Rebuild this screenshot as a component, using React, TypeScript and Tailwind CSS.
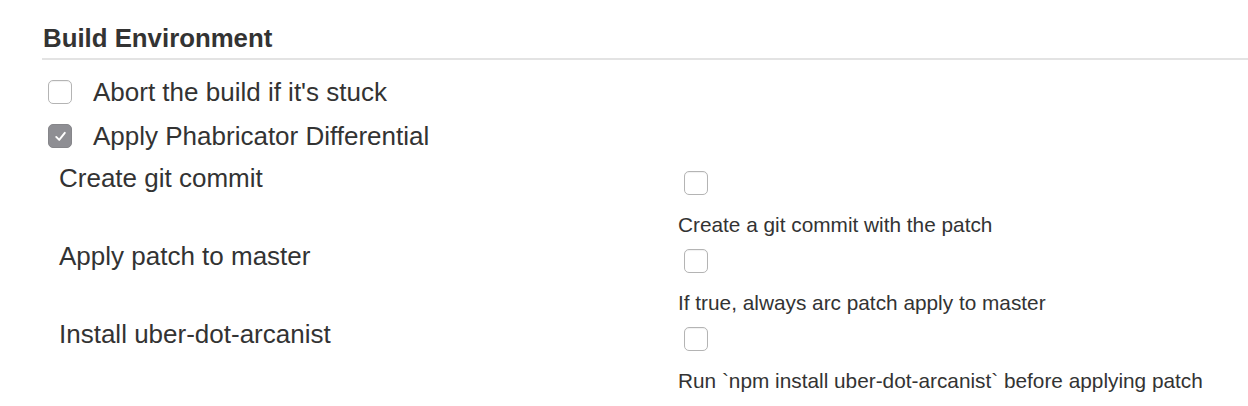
import React from 'react';

const font = { fontFamily: '"Liberation Sans", Arial, sans-serif' };

function Box({ checked = false }: { checked?: boolean }) {
  if (checked) {
    return (
      <div className="flex h-[24px] w-[24px] shrink-0 items-center justify-center rounded-[5px] border border-[#86868a] bg-[#8e8e93]">
        <svg width="15" height="15" viewBox="0 0 14 14" fill="none">
          <path d="M3 7.4 L5.8 10.2 L11 3.6" stroke="#fff" strokeWidth="1.8" strokeLinecap="round" strokeLinejoin="round" />
        </svg>
      </div>
    );
  }
  return (
    <div className="h-[24px] w-[24px] shrink-0 rounded-[5px] border border-[#b4b4b4] bg-white shadow-[inset_0_1px_1px_rgba(0,0,0,0.06)]" />
  );
}

const options = [
  { label: 'Create git commit', help: 'Create a git commit with the patch' },
  { label: 'Apply patch to master', help: 'If true, always arc patch apply to master' },
  { label: 'Install uber-dot-arcanist', help: 'Run `npm install uber-dot-arcanist` before applying patch' },
];

export default function App() {
  return (
    <div className="h-[406px] w-[1248px] overflow-hidden bg-white text-[#333]" style={font}>
      <div className="pl-[42px]">
        <div className="border-b-2 border-[#e3e3e3] pt-[18px]">
          <h2 className="pl-[1px] text-[25.8px] font-bold leading-[40px]">Build Environment</h2>
        </div>

        <div className="mt-[10px]">
          <div className="flex h-[44px] items-center gap-[21px] pl-[6px]">
            <Box />
            <span className="text-[26px] leading-[44px]">Abort the build if it's stuck</span>
          </div>
          <div className="flex h-[44px] items-center gap-[21px] pl-[6px]">
            <Box checked />
            <span className="text-[26px] leading-[44px]">Apply Phabricator Differential</span>
          </div>
        </div>

        <div className="mt-[2px] pl-[17px]">
          {options.map((o) => (
            <div key={o.label} className="grid h-[78px] grid-cols-[619px_1fr]">
              <div className="pt-[3px] text-[26px] leading-[30px]">{o.label}</div>
              <div className="pt-[11px]">
                <div className="pl-[6px]">
                  <Box />
                </div>
                <div className="mt-[18px] text-[20.8px] leading-[24px]">{o.help}</div>
              </div>
            </div>
          ))}
        </div>
      </div>
    </div>
  );
}
